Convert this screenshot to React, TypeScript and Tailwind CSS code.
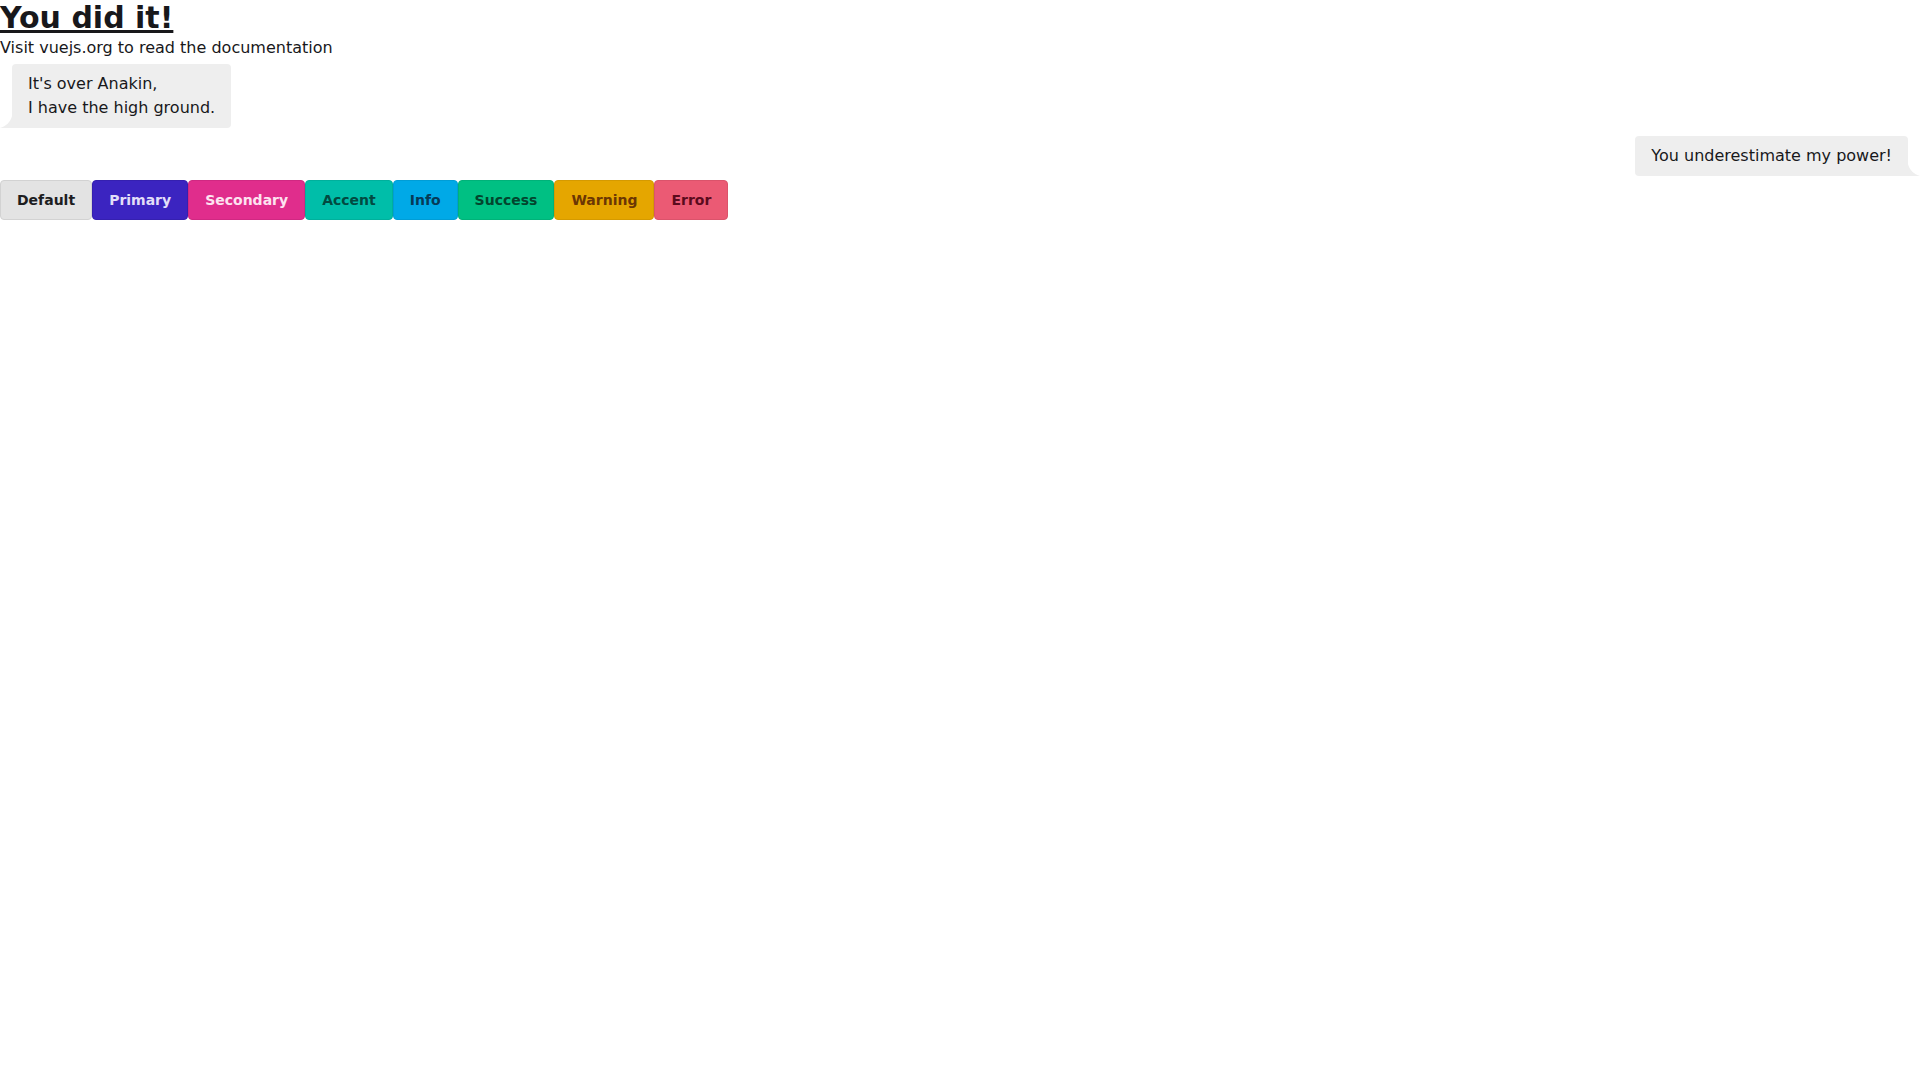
import React from "react";

const buttons: { label: string; cls: string }[] = [
  { label: "Default", cls: "bg-[#e3e3e3] border-[#d2d2d2] text-[#1d1d1f]" },
  { label: "Primary", cls: "bg-[#3b24c0] border-[#3520b0] text-[#e2def8]" },
  { label: "Secondary", cls: "bg-[#e02d8c] border-[#d02882] text-[#fde3f0]" },
  { label: "Accent", cls: "bg-[#00bea9] border-[#00b09c] text-[#024a41]" },
  { label: "Info", cls: "bg-[#00a9e7] border-[#009dd6] text-[#063a57]" },
  { label: "Success", cls: "bg-[#00c083] border-[#00b279] text-[#03452e]" },
  { label: "Warning", cls: "bg-[#e5a600] border-[#d59a00] text-[#6b3604]" },
  { label: "Error", cls: "bg-[#eb5a74] border-[#db536b] text-[#5b0a1d]" },
];

export default function App() {
  return (
    <div className="min-h-screen bg-white text-[#18181b] font-['DejaVu_Sans',sans-serif]">
      <h1 className="text-[30px] leading-9 font-bold underline">You did it!</h1>
      <p className="text-base leading-6">Visit vuejs.org to read the documentation</p>

      <div className="flex py-1 pl-3">
        <div className="relative bg-[#eeeeee] rounded-[4px] rounded-bl-none px-4 py-2 text-base leading-6">
          <svg className="absolute -left-3 bottom-0 w-3 h-3" viewBox="0 0 3 3">
            <path d="M0 3 L3 3 L3 0 C2.6 1.5 1.5 2.6 0 3 Z" fill="#eeeeee" />
          </svg>
          It's over Anakin,
          <br />I have the high ground.
        </div>
      </div>

      <div className="flex justify-end py-1 pr-3">
        <div className="relative bg-[#eeeeee] rounded-[4px] rounded-br-none px-4 py-2 text-base leading-6">
          <svg className="absolute -right-3 bottom-0 w-3 h-3" viewBox="0 0 3 3">
            <path d="M3 3 L0 3 L0 0 C0.4 1.5 1.5 2.6 3 3 Z" fill="#eeeeee" />
          </svg>
          You underestimate my power!
        </div>
      </div>

      <div className="flex">
        {buttons.map((b) => (
          <button
            key={b.label}
            className={`h-10 px-4 border rounded-[4px] text-sm font-bold ${b.cls}`}
          >
            {b.label}
          </button>
        ))}
      </div>
    </div>
  );
}
